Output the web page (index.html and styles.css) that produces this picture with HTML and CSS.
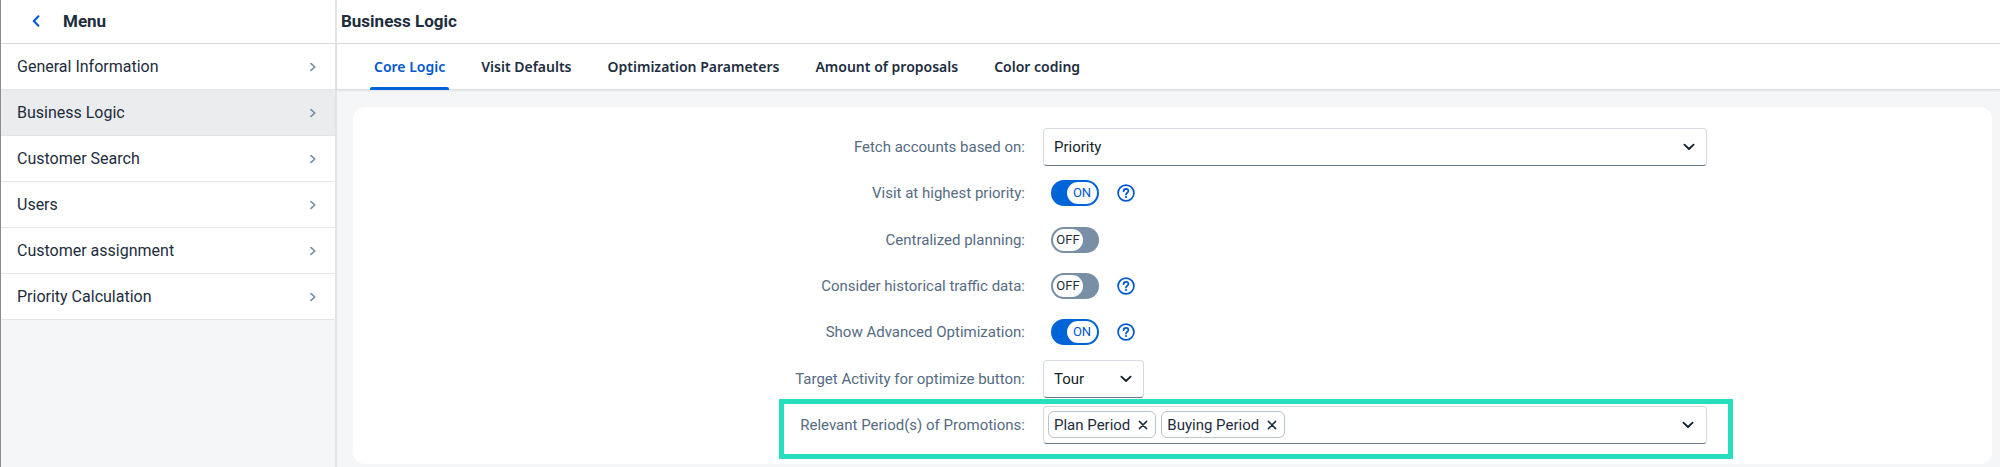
FILE: index.html
```html
<!DOCTYPE html>
<html lang="en">
<head>
<meta charset="utf-8">
<title>Business Logic</title>
<link rel="stylesheet" href="styles.css">
</head>
<body>
<svg class="defs" aria-hidden="true">
  <symbol id="chevron-right" viewBox="0 0 6 10"><path d="M1 1.6 4.8 5 1 8.4"/></symbol>
  <symbol id="chevron-left" viewBox="0 0 8 12"><path d="M6.4 1.2 1.8 6l4.6 4.8"/></symbol>
  <symbol id="chevron-down" viewBox="0 0 14 10"><path d="M2.4 2.6 7 7l4.6-4.4"/></symbol>
  <symbol id="close" viewBox="0 0 10 10"><path d="m1.4 1.4 7.2 7.2M8.6 1.4 1.4 8.6"/></symbol>
  <symbol id="help" viewBox="0 0 18 18"><circle cx="9" cy="9" r="7.9"/><path d="M6.6 7.2C6.6 5.7 7.6 4.8 9 4.8s2.4.9 2.4 2.2c0 1.7-2.4 1.8-2.4 3.6"/><circle class="dot" cx="9" cy="13" r="1.1"/></symbol>
</svg>

<div class="app">
  <aside class="sidebar">
    <header class="bar menu-bar">
      <button class="back" type="button" aria-label="Back"><svg><use href="#chevron-left"/></svg></button>
      <h2 class="title">Menu</h2>
    </header>
    <nav class="nav" aria-label="Menu">
      <a class="nav-item" href="#">General Information<svg><use href="#chevron-right"/></svg></a>
      <a class="nav-item selected" href="#" aria-current="page">Business Logic<svg><use href="#chevron-right"/></svg></a>
      <a class="nav-item" href="#">Customer Search<svg><use href="#chevron-right"/></svg></a>
      <a class="nav-item" href="#">Users<svg><use href="#chevron-right"/></svg></a>
      <a class="nav-item" href="#">Customer assignment<svg><use href="#chevron-right"/></svg></a>
      <a class="nav-item" href="#">Priority Calculation<svg><use href="#chevron-right"/></svg></a>
    </nav>
  </aside>

  <main class="main">
    <header class="bar page-bar"><h1 class="title">Business Logic</h1></header>
    <div class="tabs" role="tablist">
      <button class="tab active" type="button" role="tab" aria-selected="true">Core Logic</button>
      <button class="tab" type="button" role="tab" aria-selected="false">Visit Defaults</button>
      <button class="tab" type="button" role="tab" aria-selected="false">Optimization Parameters</button>
      <button class="tab" type="button" role="tab" aria-selected="false">Amount of proposals</button>
      <button class="tab" type="button" role="tab" aria-selected="false">Color coding</button>
    </div>

    <form class="card">
      <div class="row">
        <label class="label" for="fetch">Fetch accounts based on:</label>
        <div class="field">
          <select class="select" id="fetch"><option>Priority</option></select>
          <svg class="arrow"><use href="#chevron-down"/></svg>
        </div>
      </div>
      <div class="row">
        <label class="label" for="highest">Visit at highest priority:</label>
        <div class="controls">
          <span class="switch"><input id="highest" type="checkbox" role="switch" checked><span class="knob on">ON</span><span class="knob off">OFF</span></span>
          <button class="help" type="button" aria-label="Help"><svg><use href="#help"/></svg></button>
        </div>
      </div>
      <div class="row">
        <label class="label" for="central">Centralized planning:</label>
        <div class="controls">
          <span class="switch"><input id="central" type="checkbox" role="switch"><span class="knob on">ON</span><span class="knob off">OFF</span></span>
        </div>
      </div>
      <div class="row">
        <label class="label" for="traffic">Consider historical traffic data:</label>
        <div class="controls">
          <span class="switch"><input id="traffic" type="checkbox" role="switch"><span class="knob on">ON</span><span class="knob off">OFF</span></span>
          <button class="help" type="button" aria-label="Help"><svg><use href="#help"/></svg></button>
        </div>
      </div>
      <div class="row">
        <label class="label" for="advanced">Show Advanced Optimization:</label>
        <div class="controls">
          <span class="switch"><input id="advanced" type="checkbox" role="switch" checked><span class="knob on">ON</span><span class="knob off">OFF</span></span>
          <button class="help" type="button" aria-label="Help"><svg><use href="#help"/></svg></button>
        </div>
      </div>
      <div class="row">
        <label class="label" for="target">Target Activity for optimize button:</label>
        <div class="field compact">
          <select class="select" id="target"><option>Tour</option></select>
          <svg class="arrow"><use href="#chevron-down"/></svg>
        </div>
      </div>
      <div class="row highlighted">
        <label class="label" for="periods">Relevant Period(s) of Promotions:</label>
        <div class="multi">
          <span class="token">Plan Period<button type="button" aria-label="Remove Plan Period"><svg><use href="#close"/></svg></button></span>
          <span class="token">Buying Period<button type="button" aria-label="Remove Buying Period"><svg><use href="#close"/></svg></button></span>
          <input id="periods" type="text" role="combobox" aria-expanded="false">
          <button class="open" type="button" aria-label="Show periods"><svg><use href="#chevron-down"/></svg></button>
        </div>
      </div>
    </form>
  </main>
</div>
</body>
</html>
```
FILE: styles.css
```css
* { box-sizing: border-box; }

body {
  margin: 0;
  background: #f5f6f8;
  color: #1d2d3e;
  font: 15px/20px Roboto, sans-serif;
}

button, input, select { font: inherit; color: inherit; }
button { padding: 0; border: 0; background: none; }
svg { display: block; fill: none; stroke: currentColor; stroke-linecap: round; stroke-linejoin: round; }
.defs { position: absolute; width: 0; height: 0; }

.app {
  display: flex;
  min-height: 100vh;
  border-left: 1px solid #8c8c8f;
}

.sidebar {
  flex: none;
  width: 336px;
  border-right: 2px solid #e1e3e5;
}

.main {
  flex: 1;
  min-width: 0;
  display: flex;
  flex-direction: column;
}

.bar {
  display: flex;
  align-items: center;
  height: 44px;
  padding-bottom: 1px;
  background: #fff;
  border-bottom: 1px solid #d9dbdd;
}
.menu-bar { gap: 16px; padding-left: 23px; }
.page-bar { padding-left: 4px; }
.title { margin: 0; font-size: 17px; font-weight: 700; line-height: 24px; }

.back { display: grid; place-items: center; width: 23px; height: 24px; color: #0057d2; }
.back svg { width: 8px; height: 12px; stroke-width: 2; }

.nav-item {
  display: flex;
  align-items: center;
  justify-content: space-between;
  height: 46px;
  padding: 0 19px 0 16px;
  background: #fff;
  border-bottom: 1px solid #e3e5e7;
  font-size: 16px;
  color: inherit;
  text-decoration: none;
}
.nav-item.selected { background: #ebecee; }
.nav-item svg { width: 6px; height: 10px; stroke-width: 1.6; color: #758ca4; }

.tabs {
  display: flex;
  gap: 28px;
  padding-left: 33px;
  background: #fff;
  border-bottom: 1px solid #dadcde;
  box-shadow: 0 1px 2px #00000014;
}
.tab {
  position: relative;
  height: 45px;
  padding: 0 4px;
  font: 600 14px/20px "Noto Sans", sans-serif;
}
.tab.active { color: #0057d2; }
.tab.active::after {
  content: "";
  position: absolute;
  inset: auto 0 -1px;
  height: 3px;
  border-radius: 2px 2px 0 0;
  background: #0064d9;
}

.card {
  flex: 1;
  display: grid;
  grid-auto-rows: 1fr;
  margin: 17px 8px 3px 16px;
  padding: 17px 0 16px;
  border-radius: 12px;
  background: #fff;
}

.row {
  position: relative;
  display: grid;
  grid-template-columns: 41% 40.5%;
  gap: 18px;
  align-items: center;
}
.label { text-align: right; color: #556b82; }

.field { position: relative; }
.field.compact { width: 101px; }
.select, .multi {
  width: 100%;
  height: 38px;
  border: 1px solid #d5dae0;
  border-bottom-color: #66798f;
  border-radius: 4px;
  background: #fff;
}
.select { appearance: none; padding: 0 36px 0 10px; color: #131e29; }
.arrow, .open svg { width: 14px; height: 10px; stroke-width: 1.8; color: #131e29; }
.arrow { position: absolute; right: 11px; top: 14px; pointer-events: none; }

.controls { display: flex; align-items: center; gap: 18px; padding-left: 8px; }
.help { width: 18px; height: 18px; color: #0057d2; }
.help svg { width: 18px; height: 18px; stroke-width: 1.7; }
.dot { fill: currentColor; stroke: none; }

.switch { position: relative; width: 48px; height: 26px; }
.switch input {
  appearance: none;
  display: block;
  width: 100%;
  height: 100%;
  margin: 0;
  border-radius: 13px;
  background: #788fa6;
}
.switch input:checked { background: #0064d9; }
.knob {
  position: absolute;
  top: 2px;
  width: 30px;
  height: 22px;
  border-radius: 11px;
  background: #fff;
  font-size: 13px;
  line-height: 22px;
  text-align: center;
  pointer-events: none;
}
.knob.off { left: 2px; }
.knob.on { right: 2px; color: #0057d2; }
.switch input:checked ~ .off,
.switch input:not(:checked) ~ .on { display: none; }

.multi {
  display: flex;
  align-items: center;
  gap: 5px;
  padding: 0 11px 0 4px;
}
.token {
  flex: none;
  display: flex;
  align-items: center;
  gap: 8px;
  height: 27px;
  padding: 0 7px 0 5px;
  border: 1px solid #bcc3ca;
  border-radius: 6px;
}
.token svg { width: 10px; height: 10px; stroke-width: 1.5; }
.multi input { flex: 1; min-width: 0; height: 30px; padding: 0; border: 0; outline: 0; background: none; }

.highlighted::after {
  content: "";
  position: absolute;
  inset: -3px 15.8% -11px 26%;
  border: 5px solid #27dfbd;
  pointer-events: none;
}
```
